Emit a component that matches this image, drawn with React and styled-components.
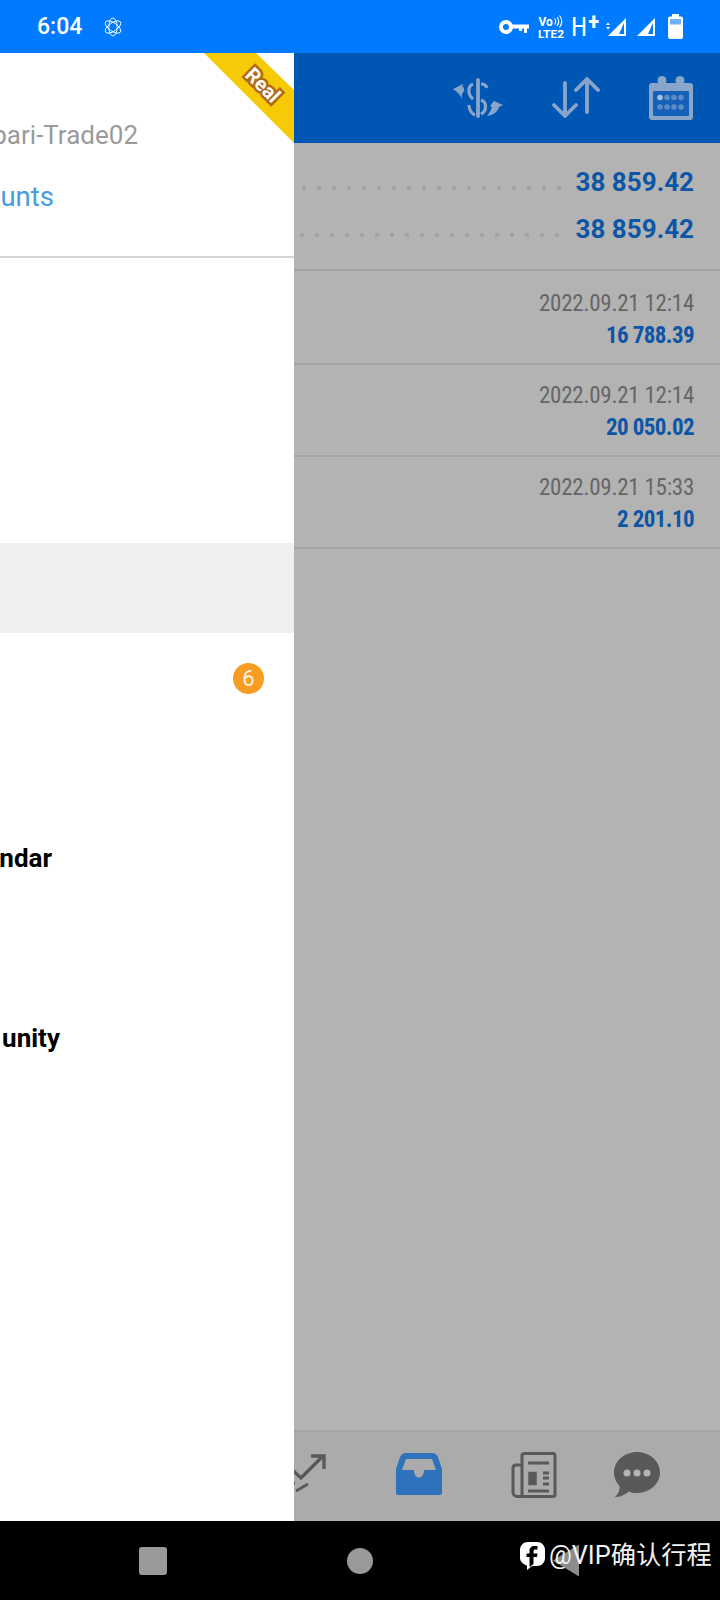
import styled, { createGlobalStyle } from 'styled-components';

const GlobalStyle = createGlobalStyle`
    * {
        box-sizing: border-box;
    }
    html, body {
        margin: 0;
        padding: 0;
        background: #b3b3b3;
        font-family: Roboto, "Noto Sans", sans-serif;
    }
`;

const menuRows = [
    {},
    {},
    {},
    { active: true },
    { badge: 6 },
    {},
    { label: 'ndar', end: 52 },
    {},
    { label: 'unity', end: 60 },
];

const records = [
    { date: '2022.09.21 12:14', amount: '16 788.39' },
    { date: '2022.09.21 12:14', amount: '20 050.02' },
    { date: '2022.09.21 15:33', amount: '2 201.10' },
];

const App = () => {
    return (
        <Page>
            <GlobalStyle />
            <StatusBar>
                <Clock>6:04</Clock>
                <AtomIcon />
                <StatusIcons>
                    <StatusItem $left={0}><KeyIcon /></StatusItem>
                    <StatusItem $left={9}><VolteIcon /></StatusItem>
                    <StatusItem $left={5}><NetworkType>H<sup>+</sup></NetworkType></StatusItem>
                    <StatusItem $left={6}><SignalIcon arrows /></StatusItem>
                    <StatusItem $left={11}><SignalIcon /></StatusItem>
                    <StatusItem $left={13}><BatteryIcon /></StatusItem>
                </StatusIcons>
            </StatusBar>
            <Body>
                <Drawer>
                    <Ribbon><RibbonLabel>Real</RibbonLabel></Ribbon>
                    <AccountHeader>
                        <ClippedLine $end={138} $top={64}>
                            <ServerName>pari-Trade02</ServerName>
                        </ClippedLine>
                        <ClippedLine $end={54} $top={26}>
                            <ManageLink>unts</ManageLink>
                        </ClippedLine>
                    </AccountHeader>
                    <Menu>
                        {menuRows.map((row, i) => (
                            <MenuRow key={i} $active={row.active}>
                                {row.label && (
                                    <ClippedLine $end={row.end}>
                                        <MenuLabel>{row.label}</MenuLabel>
                                    </ClippedLine>
                                )}
                                {row.badge && <Badge>{row.badge}</Badge>}
                            </MenuRow>
                        ))}
                    </Menu>
                </Drawer>
                <Main>
                    <Toolbar>
                        <ExchangeIcon />
                        <SortIcon />
                        <CalendarIcon />
                    </Toolbar>
                    <Balances>
                        <BalanceRow $indent={8}>
                            <Dots />
                            <BalanceValue>38 859.42</BalanceValue>
                        </BalanceRow>
                        <BalanceRow $indent={6}>
                            <Dots $right={12} />
                            <BalanceValue>38 859.42</BalanceValue>
                        </BalanceRow>
                    </Balances>
                    <RecordList>
                        {records.map((r, i) => (
                            <RecordRow key={i}>
                                <RecordDate>{r.date}</RecordDate>
                                <RecordAmount>{r.amount}</RecordAmount>
                            </RecordRow>
                        ))}
                    </RecordList>
                    <Filler />
                    <Tabs>
                        <Tab $w={115}><TradeIcon /></Tab>
                        <Tab $w={115}><InboxIcon /></Tab>
                        <Tab $w={115}><NewsIcon /></Tab>
                        <Tab $w={91}><ChatIcon /></Tab>
                    </Tabs>
                </Main>
            </Body>
            <NavBar>
                <NavSquare />
                <NavCircle />
                <NavBack />
                <Watermark>
                    <FacebookMark />
                    <WatermarkText>@VIP确认行程</WatermarkText>
                </Watermark>
            </NavBar>
        </Page>
    );
};
export default App;

const AtomIcon = () => (
    <AtomSvg viewBox="0 0 20 22" fill="none" stroke="#fff" strokeWidth="1">
        <ellipse cx="10" cy="11" rx="10" ry="4.600" transform="rotate(35 10 11)" />
        <ellipse cx="10" cy="11" rx="10" ry="4.600" transform="rotate(90 10 11)" />
        <ellipse cx="10" cy="11" rx="10" ry="4.600" transform="rotate(145 10 11)" />
    </AtomSvg>
);

const KeyIcon = () => (
    <svg width="30" height="14" viewBox="0 0 30 14" fill="#fff">
        <path fillRule="evenodd" d="M7 0a7 7 0 1 1 0 14A7 7 0 0 1 7 0zm0 4a3 3 0 1 0 0 6a3 3 0 0 0 0-6z" />
        <path d="M13 4.500h17v4h-2v4.500h-3v-4.500h-2v2.500h-3v-2.500h-7z" />
    </svg>
);

const VolteIcon = () => (
    <svg width="28" height="24" viewBox="0 0 28 24" fill="#fff">
        <text x="0.500" y="11" fontSize="12" fontWeight="700" fontFamily="Roboto">Vo</text>
        <path d="M16.500 3.500q2.500 3 0 6M19 2q3.500 4.500 0 9M21.500 .5q4.500 6 0 12" fill="none" stroke="#fff" strokeWidth="1.100" />
        <text x="0" y="22.500" fontSize="10" fontWeight="700" fontFamily="Roboto" textLength="26" lengthAdjust="spacingAndGlyphs">LTE2</text>
    </svg>
);

const SignalIcon = ({ arrows }) => (
    <svg width={arrows ? 20 : 18} height="18" viewBox={arrows ? '-2 0 20 18' : '0 0 18 18'}>
        <path fillRule="evenodd" fill="#fff" d="M0 18L18 0v18zM11 16h5V5z" />
        {arrows && <path fill="#fff" d="M-2 7l2-2.500L2 7zM-2 9l2 2.500L2 9z" />}
    </svg>
);

const BatteryIcon = () => (
    <svg width="15" height="25" viewBox="0 0 15 25">
        <path fill="#fff" d="M4 0h7v2.500h2a2 2 0 0 1 2 2V23a2 2 0 0 1-2 2H2a2 2 0 0 1-2-2V4.500a2 2 0 0 1 2-2h2z" />
        <rect x="2" y="5" width="11" height="5.500" fill="#6fb0ff" />
    </svg>
);

const ExchangeIcon = () => (
    <svg width="50" height="40" viewBox="0 0 50 40" fill="none" stroke="#8aa5ca" strokeWidth="3.200">
        <path strokeWidth="3.800" strokeLinecap="round" d="M25 2v36" />
        <path d="M28 6c3 0 5 1 6 4M20 6c-5 2-6 10 0 15" />
        <path d="M16 27c0 5 3 9 6 10M28 22c6 2 6 11 0 14" />
        <path d="M11 11c-2 0-4 1-5 4" strokeWidth="3.500" />
        <path fill="#8aa5ca" stroke="none" d="M0 11l10-5l-1 6l3 1c-3 1-4 5-3 9c-1-4-3-7-9-11z" />
        <path d="M39 33c2-1 4-4 4-7" strokeWidth="3.500" />
        <path fill="#8aa5ca" stroke="none" d="M50 27l-9-4l-4 5l2 1c-1 3-2 5-5 9c7-1 11-5 12-9z" />
    </svg>
);

const SortIcon = () => (
    <svg width="48" height="42" viewBox="0 0 48 42" fill="none" stroke="#8aa5ca" strokeWidth="3.800" strokeLinecap="round" strokeLinejoin="round">
        <path d="M13 6v33M2 28l11 11l11-11" />
        <path d="M35 2v33M24 13L35 2l11 11" />
    </svg>
);

const CalendarIcon = () => (
    <svg width="44" height="44" viewBox="0 0 44 44">
        <rect x="0" y="7" width="44" height="37" rx="3" fill="#8aa5ca" />
        <rect x="4" y="15" width="36" height="25" rx="1" fill="#1560b8" />
        <circle cx="13" cy="4.500" r="4.500" fill="#8aa5ca" />
        <circle cx="31" cy="4.500" r="4.500" fill="#8aa5ca" />
        <g fill="#5f8cc6">
            {[11, 18, 25, 32].map(x => <circle key={x} cx={x} cy="21.500" r="2.800" fill={x === 11 ? '#a8bfdd' : undefined} />)}
            {[11, 18, 25, 32].map(x => <circle key={x} cx={x} cy="31" r="2.800" />)}
        </g>
    </svg>
);

const TradeIcon = () => (
    <svg width="46" height="42" viewBox="0 0 46 42" fill="none" stroke="#595959" strokeWidth="3.400">
        <path d="M6 11l14 13L42 2M30 2h13v13" />
        <path d="M15 37l12-7M6 29h8" strokeWidth="3" />
    </svg>
);

const InboxIcon = () => (
    <InboxSvg width="46" height="42" viewBox="0 0 46 42">
        <path fill="#2f72bc" fillRule="evenodd" d="M10 0h26c3 0 5 2 6 4l4 12v24c0 1-1 2-2 2H2c-1 0-2-1-2-2V16L4 4c1-2 3-4 6-4zm0 6L6 17h12c0 10 10 10 10 0h12L36 6z" />
    </InboxSvg>
);

const NewsIcon = () => (
    <svg width="46" height="46" viewBox="0 0 46 46" fill="none" stroke="#595959" strokeWidth="3">
        <rect x="11" y="1.500" width="33" height="43" rx="2" />
        <path d="M11 44.500H6c-2 0-4-2-4-4V16c0-2 1-3 3-3h6" />
        <path d="M17 11h21M17 39h21M32 21h6M32 26h6M32 32h6" />
        <path d="M18.500 21h6v11h-6z" strokeWidth="2.500" fill="#595959" />
    </svg>
);

const ChatIcon = () => (
    <svg width="46" height="46" viewBox="0 0 46 46">
        <path fill="#595959" d="M23 0c12.700 0 23 9.300 23 20.500S35.700 41 23 41c-3 0-6-.5-8-1.500C11 43 6 45 1 45c3-3 5-6 4.500-11C2 30 0 25.500 0 20.500C0 9.300 10.300 0 23 0z" />
        <g fill="#b3b3b3">
            <circle cx="13" cy="21" r="3.500" />
            <circle cx="23" cy="21" r="3.500" />
            <circle cx="33" cy="21" r="3.500" />
        </g>
    </svg>
);

const FacebookMark = () => (
    <svg width="25" height="28" viewBox="0 0 25 28">
        <path fill="#fff" d="M8 0h9c4.500 0 8 3.500 8 8v8c0 4.500-3.500 8-8 8h-5l-5 4v-4.500C3 22 0 19.500 0 16V8c0-4.500 3.500-8 8-8z" />
        <path fill="#000" d="M9.500 25v-10H6.500v-3.500h3V9c0-3.500 2-5 5-5h3v3.500h-2c-1.500 0-2 .5-2 2v2h4l-.5 3.500H13.500v7z" />
    </svg>
);

const Page = styled.div`
    width: 720px;
    height: 1600px;
    display: flex;
    flex-direction: column;
    overflow: hidden;
`;

const StatusBar = styled.div`
    height: 53px;
    flex-shrink: 0;
    background: #007aff;
    display: flex;
    align-items: center;
    padding: 0 37px;
    color: #fff;
`;

const Clock = styled.div`
    font-size: 23px;
    font-weight: 500;
`;

const AtomSvg = styled.svg`
    width: 18px;
    height: 20px;
    margin-left: 22px;
`;

const StatusIcons = styled.div`
    margin-left: auto;
    display: flex;
    align-items: center;
`;

const StatusItem = styled.div`
    margin-left: ${p => p.$left}px;
    display: flex;
    align-items: center;
    height: 30px;
`;

const NetworkType = styled.div`
    width: 29px;
    font-size: 26px;
    font-stretch: 75%;
    line-height: 30px;
    white-space: nowrap;

    sup {
        font-size: 23px;
        font-weight: 700;
        line-height: 0;
        vertical-align: 6px;
        margin-left: 1px;
    }
`;

const Body = styled.div`
    flex: 1;
    display: flex;
    min-height: 0;
`;

const Drawer = styled.div`
    width: 294px;
    flex-shrink: 0;
    background: #fff;
    position: relative;
    overflow: hidden;
`;

const Ribbon = styled.div`
    position: absolute;
    top: 0;
    right: 0;
    width: 90px;
    height: 90px;
    background: #f7ca07;
    clip-path: polygon(0 0, 52px 0, 100% 37px, 100% 100%);
`;

const RibbonLabel = styled.div`
    position: absolute;
    left: 37px;
    top: 21px;
    width: 44px;
    height: 22px;
    transform: rotate(45deg);
    color: #fff;
    font-size: 20px;
    font-weight: 700;
    line-height: 22px;
    text-align: center;
    -webkit-text-stroke: 5px #b06a14;
    paint-order: stroke fill;
`;

const AccountHeader = styled.div`
    height: 205px;
    border-bottom: 2px solid #d6d6d6;
    overflow: hidden;
`;

// the drawer is caught mid slide, so its text runs off the left edge
const ClippedLine = styled.div`
    width: ${p => p.$end}px;
    margin-top: ${p => p.$top || 0}px;
    display: flex;
    justify-content: flex-end;
    white-space: nowrap;
`;

const ServerName = styled.div`
    font-size: 26px;
    line-height: 36px;
    color: #9a9a9a;
`;

const ManageLink = styled.div`
    font-size: 27.500px;
    line-height: 36px;
    color: #4a9be0;
`;

const Menu = styled.div`
    padding-top: 15px;
`;

const MenuRow = styled.div`
    height: 90px;
    display: flex;
    align-items: center;
    justify-content: space-between;
    background: ${p => (p.$active ? '#efefef' : 'transparent')};
    padding-right: 30px;
`;

const MenuLabel = styled.div`
    font-size: 26px;
    font-weight: 700;
    color: #000;
`;

const Badge = styled.div`
    width: 31px;
    height: 31px;
    margin-left: auto;
    border-radius: 50%;
    background: #f79d23;
    color: #fff3df;
    font-size: 22px;
    line-height: 31px;
    text-align: center;
`;

const Main = styled.div`
    flex: 1;
    min-width: 0;
    display: flex;
    flex-direction: column;
    overflow: hidden;
    background: #b3b3b3;
`;

const Toolbar = styled.div`
    height: 90px;
    flex-shrink: 0;
    background: #0056b3;
    display: flex;
    align-items: center;
    justify-content: flex-end;
    padding-right: 27px;
    gap: 49px;
`;

const Balances = styled.div`
    height: 128px;
    flex-shrink: 0;
    border-bottom: 2px solid #a3a3a3;
    padding: 22px 26px 0 0;
    display: flex;
    flex-direction: column;
    gap: 12px;
`;

const BalanceRow = styled.div`
    display: flex;
    align-items: center;
    padding-left: ${p => p.$indent}px;
`;

const Dots = styled.div`
    flex: 1;
    height: 4px;
    margin: 10px ${p => p.$right || 10}px 0 0;
    background-image: radial-gradient(circle at 2px 2px, #a2a2a2 2px, transparent 2.500px);
    background-size: 15px 4px;
    background-repeat: repeat-x;
`;

const BalanceValue = styled.div`
    font-size: 26px;
    font-weight: 700;
    line-height: 35px;
    color: #0d55a6;
`;

const RecordList = styled.div`
    padding-top: 2px;
`;

const RecordRow = styled.div`
    height: 92px;
    border-bottom: 2px solid #a3a3a3;
    padding: 17px 26px 0 0;
    display: flex;
    flex-direction: column;
    align-items: flex-end;
    gap: 4px;
`;

const RecordDate = styled.div`
    font-size: 23px;
    font-stretch: 75%;
    letter-spacing: -0.250px;
    line-height: 28px;
    color: #666;
`;

const RecordAmount = styled.div`
    font-size: 23px;
    font-stretch: 75%;
    font-weight: 700;
    letter-spacing: -0.600px;
    line-height: 28px;
    color: #0d55a6;
`;

const Filler = styled.div`
    flex: 1;
`;

const Tabs = styled.div`
    height: 91px;
    flex-shrink: 0;
    border-top: 2px solid #a3a3a3;
    background: #ababab;
    display: flex;
    padding-bottom: 4px;
    margin-left: -48px;
`;

const Tab = styled.div`
    width: ${p => p.$w}px;
    flex-shrink: 0;
    display: flex;
    align-items: center;
    justify-content: center;
`;

const InboxSvg = styled.svg`
    margin-top: -2px;
`;

const NavBar = styled.div`
    height: 79px;
    flex-shrink: 0;
    background: #000;
    position: relative;
    display: flex;
    align-items: center;
    padding-left: 139px;
`;

const NavSquare = styled.div`
    width: 28px;
    height: 28px;
    border-radius: 3px;
    background: #999;
`;

const NavCircle = styled.div`
    width: 26px;
    height: 26px;
    margin-left: 180px;
    border-radius: 50%;
    background: #999;
`;

const NavBack = styled.div`
    width: 26px;
    height: 32px;
    margin-left: 180px;
    background: #8c8c8c;
    clip-path: polygon(100% 0, 100% 100%, 0 50%);
`;

const Watermark = styled.div`
    position: absolute;
    left: 520px;
    top: 21px;
    display: flex;
    align-items: center;
    gap: 4px;
`;

const WatermarkText = styled.div`
    font-family: Roboto, "Noto Sans CJK SC", sans-serif;
    font-size: 25.300px;
    line-height: 28px;
    color: #f2f2f2;
`;
